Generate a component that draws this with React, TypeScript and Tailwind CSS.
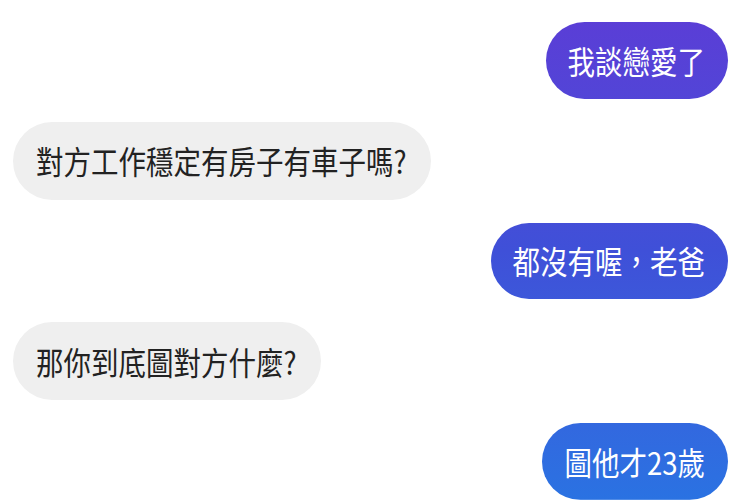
export default function App() {
  const font = { fontFamily: '"Noto Sans CJK TC", "Noto Sans", sans-serif' };
  const right = "self-end h-[77px] flex items-center pl-[22px] pr-[23px] rounded-full text-white bg-fixed bg-linear-to-b from-[#5c3cd6] via-[#3f50d8] to-[#2a72e2]";
  const left = "self-start h-[78px] flex items-center pl-[23px] pr-[24px] rounded-full text-[#222222] bg-[#efefef]";
  const t = "inline-block scale-y-[1.14]";
  return (
    <div className="w-[740px] h-[500px] bg-white overflow-hidden flex flex-col gap-[23px] pt-[22px] pl-[13px] pr-[12px] text-[27.5px] leading-none" style={font}>
      <div className={right}><span className={t}>我談戀愛了</span></div>
      <div className={left}><span className={t}>對方工作穩定有房子有車子嗎?</span></div>
      <div className={right}><span className={t}>都沒有喔，老爸</span></div>
      <div className={left}><span className={t}>那你到底圖對方什麼?</span></div>
      <div className={right}><span className={t}>圖他才23歲</span></div>
    </div>
  );
}
